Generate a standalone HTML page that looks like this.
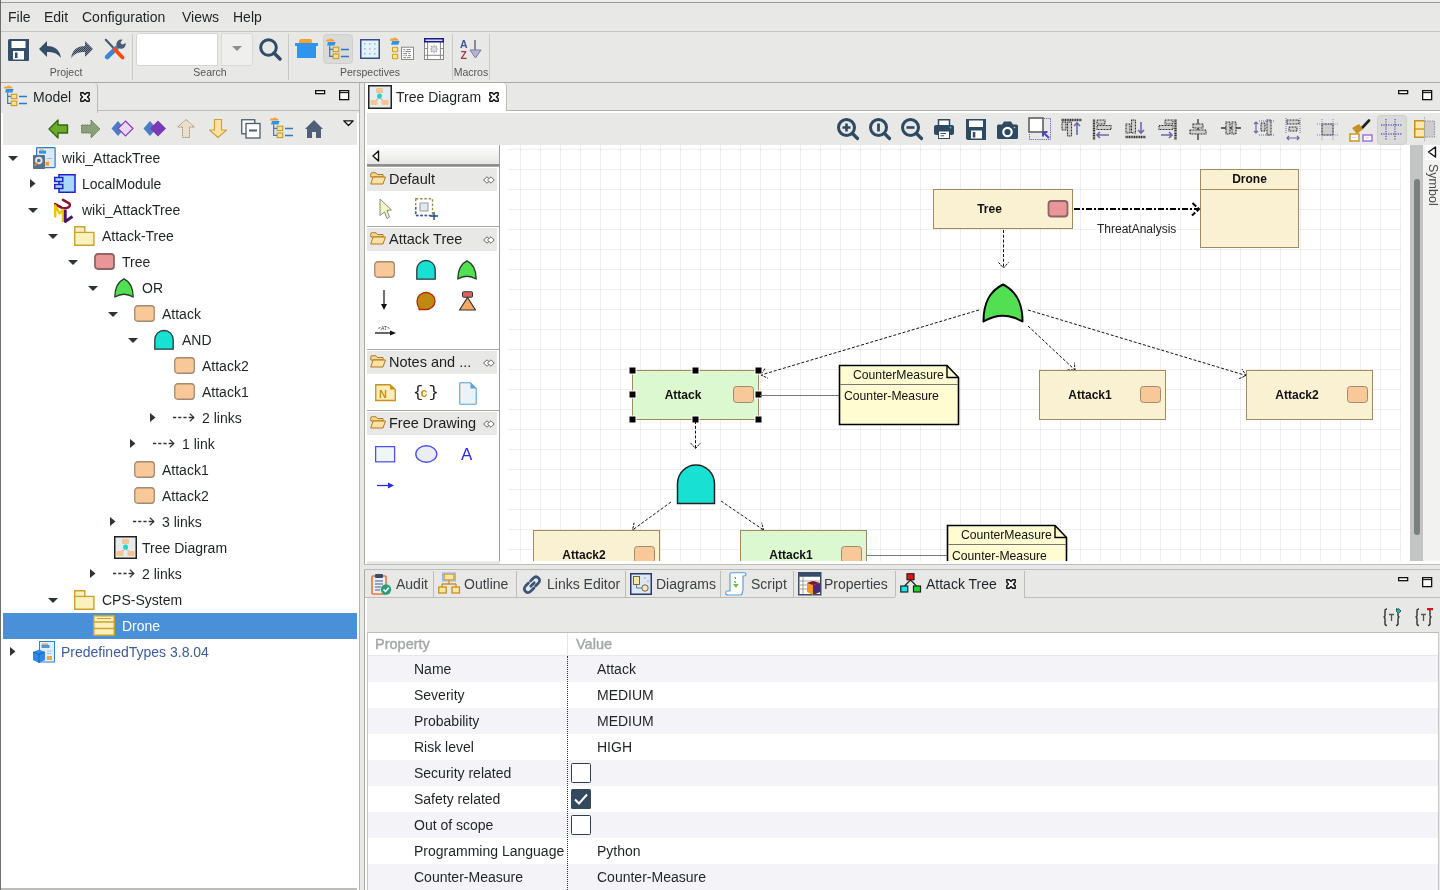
<!DOCTYPE html>
<html><head><meta charset="utf-8"><style>
html,body{margin:0;padding:0;}
body{width:1440px;height:890px;overflow:hidden;position:relative;background:#e8e8e7;font-family:"Liberation Sans",sans-serif;}
.a{position:absolute;}
.t{position:absolute;white-space:nowrap;line-height:1;will-change:transform;}
svg{overflow:visible;will-change:transform}
</style></head><body>
<div class="a" style="left:0px;top:0px;width:1440px;height:2px;background:#ececec;"></div>
<div class="a" style="left:0px;top:2px;width:1440px;height:1px;background:#9b9b98;"></div>
<div class="a" style="left:0px;top:31px;width:1440px;height:1px;background:#c4c4c0;"></div>
<div class="a" style="left:0px;top:82px;width:1440px;height:1px;background:#a9a9a5;"></div>
<div class="a" style="left:0px;top:0px;width:1px;height:890px;background:#6f6f6f;"></div>
<div class="t" style="left:7.5px;top:10.15px;font-size:14px;color:#1f2324;font-weight:normal;">File</div>
<div class="t" style="left:44.3px;top:10.15px;font-size:14px;color:#1f2324;font-weight:normal;">Edit</div>
<div class="t" style="left:82.3px;top:10.15px;font-size:14px;color:#1f2324;font-weight:normal;">Configuration</div>
<div class="t" style="left:181.5px;top:10.15px;font-size:14px;color:#1f2324;font-weight:normal;">Views</div>
<div class="t" style="left:233.3px;top:10.15px;font-size:14px;color:#1f2324;font-weight:normal;">Help</div>
<div class="a" style="left:132px;top:34px;width:1px;height:46px;background:#c9c9c6;"></div>
<div class="a" style="left:288px;top:34px;width:1px;height:46px;background:#c9c9c6;"></div>
<div class="a" style="left:452px;top:34px;width:1px;height:46px;background:#c9c9c6;"></div>
<div class="a" style="left:489px;top:34px;width:1px;height:46px;background:#c9c9c6;"></div>
<div class="t" style="left:15.5px;width:100px;text-align:center;top:67.11px;font-size:10.5px;color:#555753">Project</div>
<div class="t" style="left:160px;width:100px;text-align:center;top:67.11px;font-size:10.5px;color:#555753">Search</div>
<div class="t" style="left:320px;width:100px;text-align:center;top:67.11px;font-size:10.5px;color:#555753">Perspectives</div>
<div class="t" style="left:421px;width:100px;text-align:center;top:67.11px;font-size:10.5px;color:#555753">Macros</div>
<svg class="a" style="left:8px;top:39px;" width="21" height="22" viewBox="0 0 21 22"><path d="M0 1.5 Q0 0 1.5 0 H21 V21 Q21 22 20 22 H1.5 Q0 22 0 20.5Z" fill="#354f6b"/>
<rect x="3.5" y="2" width="14" height="7" fill="#fff"/><rect x="5" y="12" width="11" height="8.5" fill="#fff"/><rect x="7" y="13.5" width="2.5" height="5.5" fill="#354f6b"/></svg>
<svg class="a" style="left:39px;top:41px;" width="22" height="18" viewBox="0 0 22 18"><path d="M0 8 L8 0 V5 Q20 5 22 17 Q17 10 8 11 V16 Z" fill="#354f6b"/></svg>
<svg class="a" style="left:71px;top:41px;" width="22" height="18" viewBox="0 0 22 18"><defs><pattern id="chk" width="2" height="2" patternUnits="userSpaceOnUse"><rect width="1" height="1" fill="#2e4058"/><rect x="1" y="1" width="1" height="1" fill="#2e4058"/><rect x="1" width="1" height="1" fill="#7d8690"/><rect y="1" width="1" height="1" fill="#7d8690"/></pattern></defs><path d="M22 8 L14 0 V5 Q2 5 0 17 Q5 10 14 11 V16 Z" fill="url(#chk)"/></svg>
<svg class="a" style="left:104px;top:38px;" width="22" height="22" viewBox="0 0 22 22"><path d="M3.2 19 L12.5 10" stroke="#3a86d4" stroke-width="4.6" stroke-linecap="round"/>
<circle cx="17" cy="6.2" r="4.6" fill="#4a5a72"/><circle cx="18.6" cy="4.6" r="1.9" fill="#e8e8e7"/><path d="M18.6 4.6 L22 1.2" stroke="#e8e8e7" stroke-width="3.8"/>
<path d="M1.8 1.8 L9.5 10" stroke="#4a5a72" stroke-width="2.2" stroke-linecap="round"/><path d="M10.5 11 L18.5 19.5" stroke="#fb4a10" stroke-width="3.8" stroke-linecap="round"/><path d="M10 10.5 L12 12.5" stroke="#fb4a10" stroke-width="2.4"/></svg>
<div class="a" style="left:136px;top:33px;width:80px;height:31px;background:#fff;border:1px solid #d5d5d2;border-radius:3px 0 0 3px"></div>
<div class="a" style="left:221px;top:33px;width:30px;height:31px;background:#efefee;border:1px solid #dadad7;border-radius:0 3px 3px 0"></div>
<svg class="a" style="left:232px;top:46px;" width="10" height="6" viewBox="0 0 10 6"><path d="M0 0 H10 L5 5Z" fill="#8b8e8f"/></svg>
<svg class="a" style="left:259px;top:38px;" width="23" height="23" viewBox="0 0 23 23"><circle cx="9.5" cy="9.5" r="7.8" fill="none" stroke="#2e4c66" stroke-width="3"/><path d="M15 15 L21 21" stroke="#2e4c66" stroke-width="3.5" stroke-linecap="round"/></svg>
<svg class="a" style="left:295px;top:39px;" width="23" height="20" viewBox="0 0 23 20"><rect x="4" y="0" width="13" height="5" rx="2" fill="#f8a12a"/><path d="M0 4 H23 V7 H21 V19 H2 V7 H0Z" fill="#2d95ec"/></svg>
<div class="a" style="left:323px;top:34px;width:28px;height:28px;background:#dadad8;border:1px solid #cfcfcc;border-radius:4px"></div>
<svg class="a" style="left:326px;top:38px;" width="23" height="22" viewBox="0 0 23 22"><path d="M0 2.6 Q0 1.5 1.5 1.5 H3 Q4 0 5.5 0.5 L6 1.5 H7 Q8.3 1.5 8.3 2.6 V3.6 H0Z" fill="#f9a030"/><path d="M2 3.9 H9.6 L8.4 7.5 H1Z" fill="#2d94ec"/>
<path d="M3.7 7.5 V18.3 H7 M3.7 11.3 H7" stroke="#2f78c4" stroke-width="1.2" fill="none"/>
<rect x="7.2" y="9.2" width="5.6" height="4.4" fill="#fbe08c" stroke="#c99a2a" stroke-width="1.1"/><rect x="7.2" y="16" width="5.6" height="4.6" fill="#fbe08c" stroke="#c99a2a" stroke-width="1.1"/>
<path d="M15 11.5 H23 M15 18.5 H23" stroke="#2f78c4" stroke-width="1.3"/></svg>
<svg class="a" style="left:360px;top:39px;" width="20" height="20" viewBox="0 0 20 20"><rect x="0.75" y="0.75" width="18.5" height="18.5" fill="#dff4fb" stroke="#3a4a8a" stroke-width="1.5"/><rect x="4" y="4" width="1.6" height="1.6" fill="#c7a9e6"/><rect x="4" y="9" width="1.6" height="1.6" fill="#c7a9e6"/><rect x="4" y="14" width="1.6" height="1.6" fill="#c7a9e6"/><rect x="9" y="4" width="1.6" height="1.6" fill="#c7a9e6"/><rect x="9" y="9" width="1.6" height="1.6" fill="#c7a9e6"/><rect x="9" y="14" width="1.6" height="1.6" fill="#c7a9e6"/><rect x="14" y="4" width="1.6" height="1.6" fill="#c7a9e6"/><rect x="14" y="9" width="1.6" height="1.6" fill="#c7a9e6"/><rect x="14" y="14" width="1.6" height="1.6" fill="#c7a9e6"/></svg>
<svg class="a" style="left:390px;top:37px;" width="24" height="24" viewBox="0 0 24 24"><path d="M0 2.8 Q0 1.6 1.6 1.6 H3 Q4 0 5.5 0.6 L6 1.6 H7 Q8.2 1.6 8.2 2.8 V3.8 H0Z" fill="#f9a030"/><path d="M2.2 4 H9.6 L8.4 7.8 H1Z" fill="#2d94ec"/><rect x="2.5" y="10.2" width="5.2" height="4.6" rx="0.6" fill="#fce28a" stroke="#c9a030" stroke-width="1.1"/><rect x="2.5" y="17.2" width="5.2" height="4.6" rx="0.6" fill="#fce28a" stroke="#c9a030" stroke-width="1.1"/><rect x="11.5" y="10.2" width="12" height="12.3" fill="#fff" stroke="#888" stroke-width="1"/><path d="M13.3 12.6 H15.2 M16.5 12.6 H20.8 M13.3 14.6 H14.3 M15.4 14.6 H21 M13.3 16.6 H17 M18.5 16.6 H20 M13.3 18.6 H14.5 M15.5 18.6 H17 M18.2 18.6 H21 M13.3 20.6 H16 M17 20.6 H20.5" stroke="#777" stroke-width="0.9"/></svg>
<svg class="a" style="left:424px;top:38px;" width="20" height="22" viewBox="0 0 20 22"><rect x="0.5" y="0.5" width="19" height="21" fill="#fff" stroke="#888" stroke-width="1"/><path d="M3.6 4 V21.5 M16.4 4 V21.5 M0.5 10.5 H3.6 M16.4 10.5 H19.5 M0.5 17.3 H19.5" stroke="#888" stroke-width="1"/><rect x="0.75" y="0.75" width="18.5" height="3" fill="#dcdcf0" stroke="#1a1a8a" stroke-width="1.5"/><g stroke="#aaa" stroke-width="1.2"><path d="M10 6.8 V15.2 M5.8 11 H14.2 M7 8 L13 14 M13 8 L7 14"/></g><circle cx="10" cy="11" r="2.6" fill="#dcdcf0" stroke="#b0b0b0" stroke-width="0.8"/></svg>
<svg class="a" style="left:460px;top:39px;" width="22" height="20" viewBox="0 0 22 20"><text x="0" y="9" font-family="Liberation Sans" font-weight="bold" font-size="10.5" fill="#3a5a9e">A</text><text x="0.5" y="19.5" font-family="Liberation Sans" font-weight="bold" font-size="10.5" fill="#9e3a56">Z</text><path d="M15 1 V12" stroke="#6a6a8a" stroke-width="1.5"/><path d="M10 11 H21 L15.5 19Z" fill="#b6b4d6" stroke="#7a7a9a" stroke-width="1"/></svg>
<div class="a" style="left:1px;top:83px;width:358px;height:807px;background:#e8e8e7;"></div>
<div class="a" style="left:359px;top:83px;width:1px;height:807px;background:#b2b2af;"></div>
<div class="a" style="left:1px;top:83px;width:96px;height:30px;background:#e8e8e7;border-right:1px solid #bcbcb8;border-radius:0 4px 0 0"></div>
<div class="a" style="left:98px;top:110px;width:261px;height:1px;background:#bcbcb8;"></div>
<svg class="a" style="left:4px;top:85px;" width="23" height="22" viewBox="0 0 23 22"><path d="M0 2.6 Q0 1.5 1.5 1.5 H3 Q4 0 5.5 0.5 L6 1.5 H7 Q8.3 1.5 8.3 2.6 V3.6 H0Z" fill="#f9a030"/><path d="M2 3.9 H9.6 L8.4 7.5 H1Z" fill="#2d94ec"/>
<path d="M3.7 7.5 V18.3 H7 M3.7 11.3 H7" stroke="#2f78c4" stroke-width="1.2" fill="none"/>
<rect x="7.2" y="9.2" width="5.6" height="4.4" fill="#fbe08c" stroke="#c99a2a" stroke-width="1.1"/><rect x="7.2" y="16" width="5.6" height="4.6" fill="#fbe08c" stroke="#c99a2a" stroke-width="1.1"/>
<path d="M15 11.5 H23 M15 18.5 H23" stroke="#2f78c4" stroke-width="1.3"/></svg>
<div class="t" style="left:32.5px;top:90.15px;font-size:14px;color:#1f2324;font-weight:normal;">Model</div>
<svg class="a" style="left:80px;top:92px;" width="10" height="10" viewBox="0 0 10 10"><path d="M0.8 0.8 H3.3 L5 2.6 L6.7 0.8 H9.2 V3.3 L7.4 5 L9.2 6.7 V9.2 H6.7 L5 7.4 L3.3 9.2 H0.8 V6.7 L2.6 5 L0.8 3.3Z" fill="#fff" stroke="#111" stroke-width="1.4" stroke-linejoin="round"/></svg>
<svg class="a" style="left:315px;top:90px;" width="11" height="5" viewBox="0 0 11 5"><rect x="0.65" y="0.65" width="9" height="3" fill="#fff" stroke="#111" stroke-width="1.3"/></svg>
<svg class="a" style="left:339px;top:90px;" width="11" height="11" viewBox="0 0 11 11"><rect x="0.65" y="0.65" width="9" height="9" fill="#fff" stroke="#111" stroke-width="1.3"/><path d="M0.65 2.6 H9.65" stroke="#111" stroke-width="1.1"/></svg>
<div class="a" style="left:1px;top:113px;width:358px;height:777px;background:#fff;"></div>
<div class="a" style="left:3px;top:113px;width:354px;height:32px;background:#e8e8e7;"></div>
<div class="a" style="left:1px;top:888px;width:356px;height:2px;background:#bcbcb8;"></div>
<div class="a" style="left:364px;top:83px;width:1px;height:481px;background:#aaaaa7;"></div>
<div class="a" style="left:365px;top:110px;width:1075px;height:1px;background:#b0b0ac;"></div>
<div class="a" style="left:365px;top:83px;width:141px;height:29px;background:#fff;border-right:1px solid #bcbcb8;border-radius:0 4px 0 0"></div>
<div class="a" style="left:365px;top:111px;width:1075px;height:2px;background:#fff;"></div>
<div class="a" style="left:365px;top:113px;width:2px;height:451px;background:#fff;"></div>
<div class="a" style="left:367px;top:113px;width:1073px;height:32px;background:#e8e8e7;"></div>
<svg class="a" style="left:1398px;top:90px;" width="11" height="5" viewBox="0 0 11 5"><rect x="0.65" y="0.65" width="9" height="3" fill="#fff" stroke="#111" stroke-width="1.3"/></svg>
<svg class="a" style="left:1422px;top:90px;" width="11" height="11" viewBox="0 0 11 11"><rect x="0.65" y="0.65" width="9" height="9" fill="#fff" stroke="#111" stroke-width="1.3"/><path d="M0.65 2.6 H9.65" stroke="#111" stroke-width="1.1"/></svg>
<div class="a" style="left:364px;top:564px;width:1076px;height:1px;background:#bcbcb8;"></div>
<div class="a" style="left:364px;top:565px;width:1076px;height:4px;background:#e8e8e7;"></div>
<svg class="a" style="left:48px;top:119px;" width="21" height="20" viewBox="0 0 21 20"><path d="M1 10 L10 1 V6 H19.5 V14 H10 V19 Z" fill="#6aac2a" stroke="#2f6a12" stroke-width="1.4" stroke-linejoin="round"/></svg>
<svg class="a" style="left:80px;top:119px;" width="21" height="20" viewBox="0 0 21 20"><path d="M20 10 L11 1 V6 H1.5 V14 H11 V19 Z" fill="#8aa07a" stroke="#5a7050" stroke-width="1" stroke-dasharray="1 0.6"/></svg>
<svg class="a" style="left:111px;top:120px;" width="23" height="17" viewBox="0 0 23 17"><path d="M7 1 L13.5 8.5 L7 16 L0.5 8.5Z" fill="#4a7cc8"/><path d="M14.5 1 L22 8.5 L14.5 16 L7 8.5Z" fill="#ead8f2" stroke="#8a3fc0" stroke-width="1.2"/></svg>
<svg class="a" style="left:143px;top:120px;" width="24" height="17" viewBox="0 0 24 17"><path d="M7 1 L13.5 8.5 L7 16 L0.5 8.5Z" fill="#4a7cc8"/><path d="M15 0.5 L23 8.5 L15 16.5 L7 8.5Z" fill="#7a3ab8"/></svg>
<svg class="a" style="left:177px;top:119px;" width="18" height="19" viewBox="0 0 18 19"><path d="M9 0.5 L17.5 8 H12.5 V18.5 H5.5 V8 H0.5Z" fill="#e8e0c8" stroke="#9a8a6a" stroke-width="1" stroke-dasharray="1 0.6"/></svg>
<svg class="a" style="left:209px;top:119px;" width="18" height="19" viewBox="0 0 18 19"><path d="M9 18.5 L17.5 11 H12.5 V0.5 H5.5 V11 H0.5Z" fill="#fde49a" stroke="#d0a040" stroke-width="1.2" stroke-linejoin="round"/></svg>
<svg class="a" style="left:241px;top:119px;" width="20" height="20" viewBox="0 0 20 20"><rect x="0.75" y="0.75" width="13" height="14" fill="#fff" stroke="#4a5a70" stroke-width="1.3"/><rect x="5" y="4.5" width="14" height="14.5" fill="#fff" stroke="#4a5a70" stroke-width="1.3"/><path d="M8 11.5 H16" stroke="#4a5a70" stroke-width="2"/></svg>
<svg class="a" style="left:270px;top:117px;" width="23" height="22" viewBox="0 0 23 22"><path d="M0 2.6 Q0 1.5 1.5 1.5 H3 Q4 0 5.5 0.5 L6 1.5 H7 Q8.3 1.5 8.3 2.6 V3.6 H0Z" fill="#f9a030"/><path d="M2 3.9 H9.6 L8.4 7.5 H1Z" fill="#2d94ec"/>
<path d="M3.7 7.5 V18.3 H7 M3.7 11.3 H7" stroke="#2f78c4" stroke-width="1.2" fill="none"/>
<rect x="7.2" y="9.2" width="5.6" height="4.4" fill="#fbe08c" stroke="#c99a2a" stroke-width="1.1"/><rect x="7.2" y="16" width="5.6" height="4.6" fill="#fbe08c" stroke="#c99a2a" stroke-width="1.1"/>
<path d="M15 11.5 H23 M15 18.5 H23" stroke="#2f78c4" stroke-width="1.3"/></svg>
<svg class="a" style="left:305px;top:120px;" width="18" height="18" viewBox="0 0 18 18"><path d="M9 0 L18 9 H16 V18 H11 V12 H7 V18 H2 V9 H0Z" fill="#4f5f7a"/></svg>
<svg class="a" style="left:343px;top:120px;" width="11" height="6" viewBox="0 0 11 6"><path d="M0.8 0.8 H10.2 L5.5 5.5Z" fill="#fff" stroke="#111" stroke-width="1.3" stroke-linejoin="round"/></svg>
<svg class="a" style="left:7.5px;top:156px;" width="10" height="5" viewBox="0 0 10 5"><path d="M0 0 H10 L5 5Z" fill="#2e3436"/></svg>
<svg class="a" style="left:33px;top:146.5px;" width="23" height="22" viewBox="0 0 23 22"><rect x="3.6" y="0.6" width="18.5" height="20" rx="0.8" fill="#dfe9f6" stroke="#2f7ac4" stroke-width="1.2"/>
<rect x="7" y="1.8" width="3.8" height="1.8" rx="0.8" fill="#f4b050"/><rect x="6" y="3.6" width="7" height="3" fill="#2d94ec"/><path d="M13.5 11.5 H19" stroke="#9cc0e4" stroke-width="1"/><rect x="12.5" y="14.8" width="3.5" height="4" fill="#f8a020"/>
<rect x="0" y="8" width="12" height="14" rx="0.8" fill="#5a7088"/><circle cx="5.8" cy="13.5" r="2.8" fill="none" stroke="#dfe6ee" stroke-width="1.9"/><path d="M1.8 18.2 L4.3 16" stroke="#f08a30" stroke-width="1.5" stroke-linecap="round"/></svg>
<div class="t" style="left:62px;top:151.15px;font-size:14px;color:#1f2324;font-weight:normal;">wiki_AttackTree</div>
<svg class="a" style="left:30px;top:178.5px;" width="6" height="9" viewBox="0 0 6 9"><path d="M0 0 L5.5 4.5 L0 9Z" fill="#2e3436"/></svg>
<svg class="a" style="left:54px;top:174.0px;" width="22" height="19" viewBox="0 0 22 19"><rect x="5" y="0.75" width="16" height="17.5" fill="#a8d8fa" stroke="#2020c8" stroke-width="1.5"/>
<rect x="0.75" y="3.5" width="8" height="4" fill="#a8d8fa" stroke="#2020c8" stroke-width="1.5"/><rect x="0.75" y="10.5" width="8" height="4" fill="#a8d8fa" stroke="#2020c8" stroke-width="1.5"/></svg>
<div class="t" style="left:82px;top:177.15px;font-size:14px;color:#1f2324;font-weight:normal;">LocalModule</div>
<svg class="a" style="left:27.5px;top:208px;" width="10" height="5" viewBox="0 0 10 5"><path d="M0 0 H10 L5 5Z" fill="#2e3436"/></svg>
<svg class="a" style="left:54px;top:196.5px;" width="21" height="26" viewBox="0 0 21 26"><path d="M1.2 7.2 L7.5 10.6 Q10.5 12 13.8 10.6 Q17 8.6 15.2 6.4 L9 2.8" fill="none" stroke="#8c1030" stroke-width="2.6" stroke-linecap="round"/>
<path d="M1.2 20.5 V8.5 L5.6 16.5 L9 12.8 V25" fill="none" stroke="#f0c400" stroke-width="2.5" stroke-linejoin="round"/>
<path d="M11.3 12.8 V24.5 L18.5 19.5" fill="none" stroke="#4a1470" stroke-width="2.8" stroke-linejoin="round"/></svg>
<div class="t" style="left:82px;top:203.15px;font-size:14px;color:#1f2324;font-weight:normal;">wiki_AttackTree</div>
<svg class="a" style="left:47.5px;top:234px;" width="10" height="5" viewBox="0 0 10 5"><path d="M0 0 H10 L5 5Z" fill="#2e3436"/></svg>
<svg class="a" style="left:74px;top:225.5px;" width="21" height="20" viewBox="0 0 21 20"><path d="M0.75 0.75 H10.8 V6.4 H19.9 V19.3 H0.75Z" fill="#fdf0bc" stroke="#c9a230" stroke-width="1.4"/><path d="M0.75 6.4 H10.8" stroke="#c9a230" stroke-width="1.3"/></svg>
<div class="t" style="left:102px;top:229.15px;font-size:14px;color:#1f2324;font-weight:normal;">Attack-Tree</div>
<svg class="a" style="left:67.5px;top:260px;" width="10" height="5" viewBox="0 0 10 5"><path d="M0 0 H10 L5 5Z" fill="#2e3436"/></svg>
<svg class="a" style="left:94px;top:253.0px;" width="21" height="17" viewBox="0 0 21 17"><rect x="1" y="1" width="19" height="15" rx="3" fill="#e89697" stroke="#8e6566" stroke-width="1.8"/></svg>
<div class="t" style="left:122px;top:255.15px;font-size:14px;color:#1f2324;font-weight:normal;">Tree</div>
<svg class="a" style="left:87.5px;top:286px;" width="10" height="5" viewBox="0 0 10 5"><path d="M0 0 H10 L5 5Z" fill="#2e3436"/></svg>
<svg class="a" style="left:114px;top:277.5px;" width="20" height="20" viewBox="0 0 20 20"><path d="M10 0.8 Q19 5 19.2 19 Q10 13.5 0.8 19 Q1 5 10 0.8Z" fill="#52e052" stroke="#2a3a2a" stroke-width="1.4" stroke-linejoin="round"/></svg>
<div class="t" style="left:142px;top:281.15px;font-size:14px;color:#1f2324;font-weight:normal;">OR</div>
<svg class="a" style="left:107.5px;top:312px;" width="10" height="5" viewBox="0 0 10 5"><path d="M0 0 H10 L5 5Z" fill="#2e3436"/></svg>
<svg class="a" style="left:134px;top:305.0px;" width="21" height="17" viewBox="0 0 21 17"><rect x="0.75" y="0.75" width="19.5" height="15.5" rx="3" fill="#f8c898" stroke="#a08a70" stroke-width="1.3"/></svg>
<div class="t" style="left:162px;top:307.15px;font-size:14px;color:#1f2324;font-weight:normal;">Attack</div>
<svg class="a" style="left:127.5px;top:338px;" width="10" height="5" viewBox="0 0 10 5"><path d="M0 0 H10 L5 5Z" fill="#2e3436"/></svg>
<svg class="a" style="left:154px;top:329.5px;" width="20" height="20" viewBox="0 0 20 20"><path d="M0.8 19.2 V9.5 A9.2 9 0 0 1 19.2 9.5 V19.2Z" fill="#18e0d2" stroke="#2a3a3a" stroke-width="1.3"/></svg>
<div class="t" style="left:182px;top:333.15px;font-size:14px;color:#1f2324;font-weight:normal;">AND</div>
<svg class="a" style="left:174px;top:357.0px;" width="21" height="17" viewBox="0 0 21 17"><rect x="0.75" y="0.75" width="19.5" height="15.5" rx="3" fill="#f8c898" stroke="#a08a70" stroke-width="1.3"/></svg>
<div class="t" style="left:202px;top:359.15px;font-size:14px;color:#1f2324;font-weight:normal;">Attack2</div>
<svg class="a" style="left:174px;top:383.0px;" width="21" height="17" viewBox="0 0 21 17"><rect x="0.75" y="0.75" width="19.5" height="15.5" rx="3" fill="#f8c898" stroke="#a08a70" stroke-width="1.3"/></svg>
<div class="t" style="left:202px;top:385.15px;font-size:14px;color:#1f2324;font-weight:normal;">Attack1</div>
<svg class="a" style="left:150px;top:412.5px;" width="6" height="9" viewBox="0 0 6 9"><path d="M0 0 L5.5 4.5 L0 9Z" fill="#2e3436"/></svg>
<svg class="a" style="left:173px;top:412.5px;" width="22" height="9" viewBox="0 0 22 9"><path d="M0 4.5 H3.2 M5.2 4.5 H8.4 M10.4 4.5 H13.6 M15.6 4.5 H20.5" stroke="#2e3436" stroke-width="1.3"/><path d="M16.8 0.6 L20.8 4.5 L16.8 8.4" fill="none" stroke="#2e3436" stroke-width="1.3"/></svg>
<div class="t" style="left:202px;top:411.15px;font-size:14px;color:#1f2324;font-weight:normal;">2 links</div>
<svg class="a" style="left:130px;top:438.5px;" width="6" height="9" viewBox="0 0 6 9"><path d="M0 0 L5.5 4.5 L0 9Z" fill="#2e3436"/></svg>
<svg class="a" style="left:153px;top:438.5px;" width="22" height="9" viewBox="0 0 22 9"><path d="M0 4.5 H3.2 M5.2 4.5 H8.4 M10.4 4.5 H13.6 M15.6 4.5 H20.5" stroke="#2e3436" stroke-width="1.3"/><path d="M16.8 0.6 L20.8 4.5 L16.8 8.4" fill="none" stroke="#2e3436" stroke-width="1.3"/></svg>
<div class="t" style="left:182px;top:437.15px;font-size:14px;color:#1f2324;font-weight:normal;">1 link</div>
<svg class="a" style="left:134px;top:461.0px;" width="21" height="17" viewBox="0 0 21 17"><rect x="0.75" y="0.75" width="19.5" height="15.5" rx="3" fill="#f8c898" stroke="#a08a70" stroke-width="1.3"/></svg>
<div class="t" style="left:162px;top:463.15px;font-size:14px;color:#1f2324;font-weight:normal;">Attack1</div>
<svg class="a" style="left:134px;top:487.0px;" width="21" height="17" viewBox="0 0 21 17"><rect x="0.75" y="0.75" width="19.5" height="15.5" rx="3" fill="#f8c898" stroke="#a08a70" stroke-width="1.3"/></svg>
<div class="t" style="left:162px;top:489.15px;font-size:14px;color:#1f2324;font-weight:normal;">Attack2</div>
<svg class="a" style="left:110px;top:516.5px;" width="6" height="9" viewBox="0 0 6 9"><path d="M0 0 L5.5 4.5 L0 9Z" fill="#2e3436"/></svg>
<svg class="a" style="left:133px;top:516.5px;" width="22" height="9" viewBox="0 0 22 9"><path d="M0 4.5 H3.2 M5.2 4.5 H8.4 M10.4 4.5 H13.6 M15.6 4.5 H20.5" stroke="#2e3436" stroke-width="1.3"/><path d="M16.8 0.6 L20.8 4.5 L16.8 8.4" fill="none" stroke="#2e3436" stroke-width="1.3"/></svg>
<div class="t" style="left:162px;top:515.15px;font-size:14px;color:#1f2324;font-weight:normal;">3 links</div>
<svg class="a" style="left:114px;top:536.0px;" width="23" height="23" viewBox="0 0 23 23"><rect x="0.75" y="0.75" width="21.5" height="21.5" fill="#e4ecf0" stroke="#222" stroke-width="1.5"/>
<rect x="8" y="3" width="7" height="5" rx="1" fill="#f6c48e"/><circle cx="11.5" cy="11" r="2.5" fill="#18d8c8"/>
<path d="M11.5 13 L5 17 M11.5 13 L18 17" stroke="#99a" stroke-width="0.8"/><rect x="2.5" y="15" width="7" height="5" rx="1" fill="#f6c48e"/><rect x="13.5" y="15" width="7" height="5" rx="1" fill="#f6c48e"/></svg>
<div class="t" style="left:142px;top:541.15px;font-size:14px;color:#1f2324;font-weight:normal;">Tree Diagram</div>
<svg class="a" style="left:90px;top:568.5px;" width="6" height="9" viewBox="0 0 6 9"><path d="M0 0 L5.5 4.5 L0 9Z" fill="#2e3436"/></svg>
<svg class="a" style="left:113px;top:568.5px;" width="22" height="9" viewBox="0 0 22 9"><path d="M0 4.5 H3.2 M5.2 4.5 H8.4 M10.4 4.5 H13.6 M15.6 4.5 H20.5" stroke="#2e3436" stroke-width="1.3"/><path d="M16.8 0.6 L20.8 4.5 L16.8 8.4" fill="none" stroke="#2e3436" stroke-width="1.3"/></svg>
<div class="t" style="left:142px;top:567.15px;font-size:14px;color:#1f2324;font-weight:normal;">2 links</div>
<svg class="a" style="left:47.5px;top:598px;" width="10" height="5" viewBox="0 0 10 5"><path d="M0 0 H10 L5 5Z" fill="#2e3436"/></svg>
<svg class="a" style="left:74px;top:589.5px;" width="21" height="20" viewBox="0 0 21 20"><path d="M0.75 0.75 H10.8 V6.4 H19.9 V19.3 H0.75Z" fill="#fdf0bc" stroke="#c9a230" stroke-width="1.4"/><path d="M0.75 6.4 H10.8" stroke="#c9a230" stroke-width="1.3"/></svg>
<div class="t" style="left:102px;top:593.15px;font-size:14px;color:#1f2324;font-weight:normal;">CPS-System</div>
<div class="a" style="left:3px;top:613px;width:354px;height:26px;background:#4a90d9;"></div>
<svg class="a" style="left:93px;top:615.0px;" width="22" height="21" viewBox="0 0 22 21"><rect x="0.75" y="0.75" width="20.5" height="19.5" fill="#fdf0bc" stroke="#c9a230" stroke-width="1.5"/><path d="M0.75 7 H21.25 M0.75 13.5 H21.25" stroke="#c9a230" stroke-width="1.3"/><path d="M4 3.5 H18" stroke="#c9a230" stroke-width="1"/></svg>
<div class="t" style="left:122px;top:619.15px;font-size:14px;color:#ffffff;font-weight:normal;">Drone</div>
<svg class="a" style="left:10px;top:646.5px;" width="6" height="9" viewBox="0 0 6 9"><path d="M0 0 L5.5 4.5 L0 9Z" fill="#2e3436"/></svg>
<svg class="a" style="left:33px;top:640.5px;" width="22" height="22" viewBox="0 0 22 22"><rect x="6.5" y="0.5" width="15" height="20.5" fill="#e3eefa" stroke="#2f7fd0" stroke-width="1"/>
<rect x="9" y="2.5" width="6" height="2" fill="#f4a640"/><rect x="8.5" y="4" width="8" height="3" fill="#3f9be8"/><path d="M14 10 H19 M14 12.5 H18" stroke="#8ab8e8" stroke-width="0.8"/><rect x="14" y="15" width="5" height="4" fill="#f4a640"/>
<path d="M0 11 L6 8.5 L12 11 V19 L6 22 L0 19Z" fill="#2d8ae8"/><path d="M0 11 L6 13.5 L12 11 M6 13.5 V22" stroke="#1a5aa8" stroke-width="0.8" fill="none"/></svg>
<div class="t" style="left:61px;top:645.15px;font-size:14px;color:#3d5c9c;font-weight:normal;">PredefinedTypes 3.8.04</div>
<svg class="a" style="left:368px;top:85px;" width="24" height="24" viewBox="0 0 24 24"><rect x="0.75" y="0.75" width="22.5" height="22.5" fill="#e4ecf0" stroke="#222" stroke-width="1.5"/>
<rect x="8" y="3" width="7" height="5" rx="1" fill="#f6c48e"/><circle cx="11.5" cy="11" r="2.5" fill="#18d8c8"/>
<path d="M11.5 13 L5 17 M11.5 13 L18 17" stroke="#99a" stroke-width="0.8"/><rect x="2.5" y="15" width="7" height="5" rx="1" fill="#f6c48e"/><rect x="13.5" y="15" width="7" height="5" rx="1" fill="#f6c48e"/></svg>
<div class="t" style="left:396px;top:90.15px;font-size:14px;color:#1f2324;font-weight:normal;">Tree Diagram</div>
<svg class="a" style="left:489px;top:92px;" width="11" height="10" viewBox="0 0 11 10"><path d="M0.8 0.8 H3.3 L5 2.6 L6.7 0.8 H9.2 V3.3 L7.4 5 L9.2 6.7 V9.2 H6.7 L5 7.4 L3.3 9.2 H0.8 V6.7 L2.6 5 L0.8 3.3Z" fill="#fff" stroke="#111" stroke-width="1.4" stroke-linejoin="round"/></svg>
<svg class="a" style="left:837px;top:118px;" width="22" height="22" viewBox="0 0 22 22"><circle cx="9.5" cy="9.5" r="8" fill="none" stroke="#2e4a62" stroke-width="3"/><path d="M15.5 15.5 L20.5 20.5" stroke="#2e4a62" stroke-width="3.2" stroke-linecap="round"/><path d="M9.5 5.5 V13.5 M5.5 9.5 H13.5" stroke="#2e4a62" stroke-width="2.6"/></svg>
<svg class="a" style="left:869px;top:118px;" width="22" height="22" viewBox="0 0 22 22"><circle cx="9.5" cy="9.5" r="8" fill="none" stroke="#2e4a62" stroke-width="3"/><path d="M15.5 15.5 L20.5 20.5" stroke="#2e4a62" stroke-width="3.2" stroke-linecap="round"/><path d="M9.5 5.5 V13.5" stroke="#2e4a62" stroke-width="2.8"/></svg>
<svg class="a" style="left:901px;top:118px;" width="22" height="22" viewBox="0 0 22 22"><circle cx="9.5" cy="9.5" r="8" fill="none" stroke="#2e4a62" stroke-width="3"/><path d="M15.5 15.5 L20.5 20.5" stroke="#2e4a62" stroke-width="3.2" stroke-linecap="round"/><path d="M5.5 9.5 H13.5" stroke="#2e4a62" stroke-width="2.6"/></svg>
<svg class="a" style="left:934px;top:119px;" width="20" height="20" viewBox="0 0 20 20"><rect x="4.5" y="0.75" width="11" height="6" fill="#fff" stroke="#2e4a62" stroke-width="1.5"/><rect x="0" y="6" width="20" height="10" rx="2" fill="#2e4a62"/><circle cx="16.5" cy="8.5" r="1" fill="#2ac0a0"/><rect x="4.5" y="12" width="11" height="7.5" fill="#fff" stroke="#2e4a62" stroke-width="1"/><path d="M6.5 14.5 H12 M6.5 16.8 H10" stroke="#2e4a62" stroke-width="0.9"/></svg>
<svg class="a" style="left:966px;top:119px;" width="20" height="21" viewBox="0 0 20 21"><path d="M0 0 H20 V21 H1.5 L0 19.5Z" fill="#2e4a62"/><rect x="3" y="1.5" width="14" height="6.5" fill="#fff"/><rect x="5" y="11.5" width="11" height="8" fill="#fff"/><rect x="6.8" y="13" width="2.5" height="5.5" fill="#2e4a62"/></svg>
<svg class="a" style="left:997px;top:121px;" width="21" height="18" viewBox="0 0 21 18"><path d="M0 5 Q0 3.5 1.5 3.5 H5 L7 0.5 H14 L16 3.5 H19.5 Q21 3.5 21 5 V16.5 Q21 18 19.5 18 H1.5 Q0 18 0 16.5Z" fill="#2e4a62"/><circle cx="10.5" cy="11" r="4.2" fill="none" stroke="#fff" stroke-width="2.2"/><circle cx="17.5" cy="6.5" r="0.8" fill="#f8d040"/></svg>
<svg class="a" style="left:1028px;top:117px;" width="24" height="24" viewBox="0 0 24 24"><rect x="1" y="1" width="14" height="14" fill="#fff" stroke="#555" stroke-width="1.5"/><path d="M16 1.5 H22.5 V22.5 H1.5 V16" fill="none" stroke="#6a5acd" stroke-width="1" stroke-dasharray="1.2 1"/><path d="M21 21 L15 15 M15 15 V19.5 M15 15 H19.5" stroke="#4a4ab0" stroke-width="2"/></svg>
<svg class="a" style="left:1061px;top:119px;" width="22" height="20" viewBox="0 0 22 20"><g fill="#cfcfcf" stroke="#333" stroke-width="1.1" stroke-dasharray="1 0.5"><rect x="1" y="3" width="4" height="8"/><rect x="6.5" y="3" width="4" height="14"/></g><path d="M0.5 1 H20.5" stroke="#333" stroke-width="2.4" stroke-dasharray="1.2 0.5"/><path d="M16 16 V4 M13 7 L16 4 L19 7" stroke="#6a6aa8" stroke-width="1.6" fill="none"/></svg>
<svg class="a" style="left:1093px;top:119px;" width="20" height="22" viewBox="0 0 20 22"><g fill="#cfcfcf" stroke="#333" stroke-width="1.1" stroke-dasharray="1 0.5"><rect x="4" y="1" width="8" height="4"/><rect x="4" y="6.5" width="14" height="4"/></g><path d="M1 0.5 V21" stroke="#333" stroke-width="2.4" stroke-dasharray="1.2 0.5"/><path d="M16 16 H4 M7 13 L4 16 L7 19" stroke="#6a6aa8" stroke-width="1.6" fill="none"/></svg>
<svg class="a" style="left:1125px;top:119px;" width="22" height="20" viewBox="0 0 22 20"><g fill="#cfcfcf" stroke="#333" stroke-width="1.1" stroke-dasharray="1 0.5"><rect x="1" y="5" width="4" height="9"/><rect x="6.5" y="1" width="4" height="13"/></g><path d="M0.5 18 H20.5" stroke="#333" stroke-width="2.4" stroke-dasharray="1.2 0.5"/><path d="M16 3 V14 M13 11 L16 14 L19 11" stroke="#6a6aa8" stroke-width="1.6" fill="none"/></svg>
<svg class="a" style="left:1157px;top:119px;" width="20" height="22" viewBox="0 0 20 22"><g fill="#cfcfcf" stroke="#333" stroke-width="1.1" stroke-dasharray="1 0.5"><rect x="8" y="1" width="8" height="4"/><rect x="2" y="6.5" width="14" height="4"/></g><path d="M18.5 0.5 V21" stroke="#333" stroke-width="2.4" stroke-dasharray="1.2 0.5"/><path d="M4 16 H15 M12 13 L15 16 L12 19" stroke="#6a6aa8" stroke-width="1.6" fill="none"/></svg>
<svg class="a" style="left:1189px;top:119px;" width="20" height="21" viewBox="0 0 20 21"><g fill="#cfcfcf" stroke="#333" stroke-width="1.1" stroke-dasharray="1 0.5"><rect x="4" y="5" width="10" height="4"/><rect x="1" y="11" width="16" height="4"/></g><path d="M9 0 V5 M9 9 V11 M9 15 V21" stroke="#333" stroke-width="1.3"/></svg>
<svg class="a" style="left:1221px;top:119px;" width="20" height="21" viewBox="0 0 20 21"><g fill="#cfcfcf" stroke="#333" stroke-width="1.1" stroke-dasharray="1 0.5"><rect x="5" y="3" width="4" height="12"/><rect x="11" y="3" width="4" height="12"/></g><path d="M0 9 H5 M9 9 H11 M15 9 H20" stroke="#333" stroke-width="1.3"/></svg>
<svg class="a" style="left:1253px;top:119px;" width="22" height="20" viewBox="0 0 22 20"><g fill="#cfcfcf" stroke="#333" stroke-width="1.1" stroke-dasharray="1 0.5"><rect x="8" y="4" width="4" height="8"/><rect x="14" y="1" width="4" height="15"/></g><path d="M6 2 H21 M6 16 H21" stroke="#6a6aa8" stroke-width="1" stroke-dasharray="1 1"/><path d="M3 3 V14 M1 5 L3 3 L5 5 M1 12 L3 14 L5 12" stroke="#6a6aa8" stroke-width="1.2" fill="none"/></svg>
<svg class="a" style="left:1285px;top:117px;" width="16" height="24" viewBox="0 0 16 24"><g fill="#cfcfcf" stroke="#333" stroke-width="1.1" stroke-dasharray="1 0.5"><rect x="2" y="3" width="12" height="4"/><rect x="4" y="10" width="8" height="4"/></g><path d="M1 1 V17 M15 1 V17" stroke="#6a6aa8" stroke-width="1" stroke-dasharray="1 1"/><path d="M2 21 H14 M4 19 L2 21 L4 23 M12 19 L14 21 L12 23" stroke="#6a6aa8" stroke-width="1.2" fill="none"/></svg>
<svg class="a" style="left:1317px;top:119px;" width="22" height="22" viewBox="0 0 22 22"><g fill="#cfcfcf" stroke="#333" stroke-width="1.1" stroke-dasharray="1 0.5"><rect x="5" y="5" width="11" height="11"/></g><path d="M0 5 H21 M5 0 V21 M16 0 V21 M0 16 H21" stroke="#6a6aa8" stroke-width="1" stroke-dasharray="1 1.2" opacity="0.8"/></svg>
<svg class="a" style="left:1349px;top:119px;" width="24" height="23" viewBox="0 0 24 23"><path d="M13 9 L20 1.5" stroke="#222" stroke-width="2.6" stroke-linecap="round"/><path d="M3 9 L10 5 L14 10 L8 15Z" fill="#c8901c"/><rect x="1" y="15" width="9" height="7" fill="#fff" stroke="#c8901c" stroke-width="1.4"/><rect x="14" y="16" width="9" height="6" fill="#fff" stroke="#9a6ad8" stroke-width="1.4"/><path d="M3.5 18.5 H7.5 M16.5 19 H20.5" stroke="#8ab" stroke-width="0.9" stroke-dasharray="1 1"/></svg>
<div class="a" style="left:1377px;top:115px;width:28px;height:28px;background:#dadad8;border:1px solid #cfcfcc;border-radius:4px"></div>
<svg class="a" style="left:1381px;top:119px;" width="21" height="21" viewBox="0 0 21 21"><path d="M0 6 H21 M0 15 H21 M5 0 V21 M14 0 V21" stroke="#5a5ac0" stroke-width="1.3" stroke-dasharray="1.2 1.2"/></svg>
<svg class="a" style="left:1414px;top:117px;" width="22" height="24" viewBox="0 0 22 24"><rect x="0.75" y="3.75" width="10" height="16.5" fill="#fce8a8" stroke="#c8901c" stroke-width="1.5"/><path d="M0.75 12 H10.75" stroke="#c8901c" stroke-width="1.3"/><rect x="10.5" y="4" width="10" height="16" fill="#ccc" stroke="#999" stroke-width="1.2" stroke-dasharray="1.5 1"/><path d="M10.5 0 V24" stroke="#aaa" stroke-width="1" stroke-dasharray="1.5 1"/></svg>
<div class="a" style="left:367px;top:145px;width:132px;height:19px;background:linear-gradient(#ffffff,#e6e6e4)"></div>
<div class="a" style="left:367px;top:164px;width:132px;height:2px;background:#8f8f8c;"></div>
<div class="a" style="left:499px;top:145px;width:1px;height:416px;background:#9d9d9a;"></div>
<div class="a" style="left:367px;top:166px;width:132px;height:395px;background:#fff;"></div>
<svg class="a" style="left:372px;top:150px;" width="8" height="12" viewBox="0 0 8 12"><path d="M6.5 1 L1 6 L6.5 11Z" fill="#fff" stroke="#111" stroke-width="1.4" stroke-linejoin="round"/></svg>
<div class="a" style="left:367px;top:166px;width:132px;height:1px;background:#a8a8a5;"></div>
<div class="a" style="left:367px;top:168px;width:130px;height:23px;background:#e8e8e7;"></div>
<svg class="a" style="left:370px;top:172px;" width="16" height="13" viewBox="0 0 16 13"><path d="M0.75 2 Q0.75 0.75 2 0.75 H6 L7.5 2.5 H13 V5 H0.75Z" fill="#f8d890" stroke="#b07820" stroke-width="1"/><path d="M0.75 12 L3 5 H15.5 L13 12Z" fill="#fbe2a0" stroke="#b07820" stroke-width="1" stroke-linejoin="round"/></svg>
<div class="t" style="left:388.5px;top:171.73px;font-size:14.5px;color:#222;font-weight:normal;">Default</div>
<svg class="a" style="left:483px;top:176px;" width="12" height="8" viewBox="0 0 12 8"><path d="M0.6 4 L4 0.8 L6 2.6 L8 0.8 L11.2 4 L8 7.2 L6 5.4 L4 7.2Z" fill="#fff" stroke="#555" stroke-width="0.9" stroke-linejoin="round"/><path d="M6 2.6 L4.4 4 L6 5.4" fill="none" stroke="#555" stroke-width="0.8"/></svg>
<svg class="a" style="left:379px;top:198px;" width="14" height="22" viewBox="0 0 14 22"><path d="M1 1 L12.5 12 L8 12.5 L10.5 19 L8 20.5 L5.5 14 L1 17.5Z" fill="#f8f4c0" stroke="#888" stroke-width="1" stroke-linejoin="round"/></svg>
<svg class="a" style="left:415px;top:198px;" width="23" height="23" viewBox="0 0 23 23"><path d="M0.75 0.75 H17.5 V17.5 H0.75Z" fill="none" stroke="#9a8a50" stroke-width="1.3" stroke-dasharray="2.5 1.8"/><path d="M0.75 9 V17.5 H15" fill="none" stroke="#2a5aa8" stroke-width="1.3" stroke-dasharray="2.5 1.8"/><rect x="5" y="5" width="8" height="8" fill="#dde8f0" stroke="#999" stroke-width="1"/><path d="M19 14 V22 M15 18 H23" stroke="#1a4a90" stroke-width="1.4"/></svg>
<div class="a" style="left:367px;top:226px;width:132px;height:1px;background:#a8a8a5;"></div>
<div class="a" style="left:367px;top:228px;width:130px;height:23px;background:#e8e8e7;"></div>
<svg class="a" style="left:370px;top:232px;" width="16" height="13" viewBox="0 0 16 13"><path d="M0.75 2 Q0.75 0.75 2 0.75 H6 L7.5 2.5 H13 V5 H0.75Z" fill="#f8d890" stroke="#b07820" stroke-width="1"/><path d="M0.75 12 L3 5 H15.5 L13 12Z" fill="#fbe2a0" stroke="#b07820" stroke-width="1" stroke-linejoin="round"/></svg>
<div class="t" style="left:388.5px;top:231.73px;font-size:14.5px;color:#222;font-weight:normal;">Attack Tree</div>
<svg class="a" style="left:483px;top:236px;" width="12" height="8" viewBox="0 0 12 8"><path d="M0.6 4 L4 0.8 L6 2.6 L8 0.8 L11.2 4 L8 7.2 L6 5.4 L4 7.2Z" fill="#fff" stroke="#555" stroke-width="0.9" stroke-linejoin="round"/><path d="M6 2.6 L4.4 4 L6 5.4" fill="none" stroke="#555" stroke-width="0.8"/></svg>
<svg class="a" style="left:374px;top:261px;" width="22" height="17" viewBox="0 0 22 17"><rect x="0.75" y="0.75" width="19.5" height="15.5" rx="3" fill="#f8c898" stroke="#a08a70" stroke-width="1.3"/></svg>
<svg class="a" style="left:416px;top:260px;" width="20" height="20" viewBox="0 0 20 20"><path d="M0.8 19.2 V9.5 A9.2 9 0 0 1 19.2 9.5 V19.2Z" fill="#18e0d2" stroke="#2a3a3a" stroke-width="1.3"/></svg>
<svg class="a" style="left:457px;top:260px;" width="20" height="20" viewBox="0 0 20 20"><path d="M10 0.8 Q19 5 19.2 19 Q10 13.5 0.8 19 Q1 5 10 0.8Z" fill="#52e052" stroke="#2a3a2a" stroke-width="1.4" stroke-linejoin="round"/></svg>
<svg class="a" style="left:380px;top:290px;" width="8" height="21" viewBox="0 0 8 21"><path d="M4 0 V16" stroke="#111" stroke-width="1.2"/><path d="M1 14 L4 20 L7 14Z" fill="#111"/></svg>
<svg class="a" style="left:416px;top:291px;" width="20" height="20" viewBox="0 0 20 20"><path d="M3 17 Q1 14 1 10 A9 8.5 0 1 1 10 18.5 H3Z" fill="#c08a10" stroke="#b02a10" stroke-width="1.3" stroke-linejoin="round"/></svg>
<svg class="a" style="left:458px;top:291px;" width="19" height="20" viewBox="0 0 19 20"><rect x="4.5" y="0.75" width="10" height="5.5" rx="1" fill="#e06060" stroke="#333" stroke-width="1"/><path d="M9.5 6.5 L17.5 19 H1.5Z" fill="#f8a860" stroke="#333" stroke-width="1.2" stroke-linejoin="round"/></svg>
<svg class="a" style="left:374px;top:325px;" width="23" height="11" viewBox="0 0 23 11"><text x="4" y="4.5" font-family="Liberation Sans" font-size="5" fill="#333">&lt;AT&gt;</text><path d="M1 8 H18" stroke="#111" stroke-width="1.3"/><path d="M16 5.5 L22 8 L16 10.5Z" fill="#111"/></svg>
<div class="a" style="left:367px;top:349px;width:132px;height:1px;background:#a8a8a5;"></div>
<div class="a" style="left:367px;top:351px;width:130px;height:23px;background:#e8e8e7;"></div>
<svg class="a" style="left:370px;top:355px;" width="16" height="13" viewBox="0 0 16 13"><path d="M0.75 2 Q0.75 0.75 2 0.75 H6 L7.5 2.5 H13 V5 H0.75Z" fill="#f8d890" stroke="#b07820" stroke-width="1"/><path d="M0.75 12 L3 5 H15.5 L13 12Z" fill="#fbe2a0" stroke="#b07820" stroke-width="1" stroke-linejoin="round"/></svg>
<div class="t" style="left:388.5px;top:354.73px;font-size:14.5px;color:#222;font-weight:normal;">Notes and ...</div>
<svg class="a" style="left:483px;top:359px;" width="12" height="8" viewBox="0 0 12 8"><path d="M0.6 4 L4 0.8 L6 2.6 L8 0.8 L11.2 4 L8 7.2 L6 5.4 L4 7.2Z" fill="#fff" stroke="#555" stroke-width="0.9" stroke-linejoin="round"/><path d="M6 2.6 L4.4 4 L6 5.4" fill="none" stroke="#555" stroke-width="0.8"/></svg>
<svg class="a" style="left:375px;top:384px;" width="21" height="18" viewBox="0 0 21 18"><path d="M0.75 0.75 H15 L20.25 5.5 V16.5 H0.75Z" fill="#fcecb8" stroke="#c8901c" stroke-width="1.3"/><path d="M15 0.75 V5.5 H20.25Z" fill="#c8901c"/><text x="4" y="13.5" font-family="Liberation Sans" font-weight="bold" font-size="11" fill="#c8901c">N</text></svg>
<svg class="a" style="left:413px;top:382px;" width="26" height="20" viewBox="0 0 26 20"><text x="0" y="15" font-family="Liberation Mono" font-size="17" fill="#222">{</text><text x="15.5" y="15" font-family="Liberation Mono" font-size="17" fill="#222">}</text><text x="7.5" y="15" font-family="Liberation Sans" font-weight="bold" font-size="12.5" fill="#c8901c">c</text></svg>
<svg class="a" style="left:459px;top:382px;" width="18" height="23" viewBox="0 0 18 23"><path d="M0.75 1.5 Q0.75 0.75 1.5 0.75 H11.5 L17.25 6.5 V21.5 Q17.25 22.25 16.5 22.25 H1.5 Q0.75 22.25 0.75 21.5Z" fill="#eaf2fa" stroke="#5ea0d6" stroke-width="1.1"/><path d="M11.5 0.75 V6.5 H17.25Z" fill="#5ea0d6"/></svg>
<div class="a" style="left:367px;top:410px;width:132px;height:1px;background:#a8a8a5;"></div>
<div class="a" style="left:367px;top:412px;width:130px;height:23px;background:#e8e8e7;"></div>
<svg class="a" style="left:370px;top:416px;" width="16" height="13" viewBox="0 0 16 13"><path d="M0.75 2 Q0.75 0.75 2 0.75 H6 L7.5 2.5 H13 V5 H0.75Z" fill="#f8d890" stroke="#b07820" stroke-width="1"/><path d="M0.75 12 L3 5 H15.5 L13 12Z" fill="#fbe2a0" stroke="#b07820" stroke-width="1" stroke-linejoin="round"/></svg>
<div class="t" style="left:388.5px;top:415.73px;font-size:14.5px;color:#222;font-weight:normal;">Free Drawing</div>
<svg class="a" style="left:483px;top:420px;" width="12" height="8" viewBox="0 0 12 8"><path d="M0.6 4 L4 0.8 L6 2.6 L8 0.8 L11.2 4 L8 7.2 L6 5.4 L4 7.2Z" fill="#fff" stroke="#555" stroke-width="0.9" stroke-linejoin="round"/><path d="M6 2.6 L4.4 4 L6 5.4" fill="none" stroke="#555" stroke-width="0.8"/></svg>
<svg class="a" style="left:375px;top:446px;" width="21" height="18" viewBox="0 0 21 18"><rect x="0.65" y="0.65" width="19" height="15.2" fill="#eef6f8" stroke="#4848f0" stroke-width="1.2"/></svg>
<svg class="a" style="left:414px;top:445px;" width="24" height="19" viewBox="0 0 24 19"><ellipse cx="12.3" cy="9" rx="10.5" ry="8.2" fill="#eaeef2" stroke="#5050f0" stroke-width="1.4"/></svg>
<div class="t" style="left:460.5px;top:446.31px;font-size:17px;color:#2a2ae8;font-weight:normal;">A</div>
<svg class="a" style="left:377px;top:481px;" width="18" height="9" viewBox="0 0 18 9"><path d="M0 4.5 H12" stroke="#2a2ae0" stroke-width="1.3"/><path d="M11 1.5 L17 4.5 L11 7.5Z" fill="#2a2ae0"/></svg>
<div class="a" style="left:367px;top:561px;width:132px;height:1px;background:#ececec;"></div>
<div class="a" style="left:500px;top:145px;width:940px;height:419px;background:#fff;"></div>
<svg class="a" style="left:500px;top:145px;" width="901" height="416" viewBox="0 0 901 416"><rect x="20" y="0" width="1" height="416" fill="#000" fill-opacity="0.065"/><rect x="40" y="0" width="1" height="416" fill="#000" fill-opacity="0.065"/><rect x="60" y="0" width="1" height="416" fill="#000" fill-opacity="0.065"/><rect x="80" y="0" width="1" height="416" fill="#000" fill-opacity="0.065"/><rect x="100" y="0" width="1" height="416" fill="#000" fill-opacity="0.065"/><rect x="120" y="0" width="1" height="416" fill="#000" fill-opacity="0.065"/><rect x="140" y="0" width="1" height="416" fill="#000" fill-opacity="0.065"/><rect x="160" y="0" width="1" height="416" fill="#000" fill-opacity="0.065"/><rect x="180" y="0" width="1" height="416" fill="#000" fill-opacity="0.065"/><rect x="200" y="0" width="1" height="416" fill="#000" fill-opacity="0.065"/><rect x="220" y="0" width="1" height="416" fill="#000" fill-opacity="0.065"/><rect x="240" y="0" width="1" height="416" fill="#000" fill-opacity="0.065"/><rect x="260" y="0" width="1" height="416" fill="#000" fill-opacity="0.065"/><rect x="280" y="0" width="1" height="416" fill="#000" fill-opacity="0.065"/><rect x="300" y="0" width="1" height="416" fill="#000" fill-opacity="0.065"/><rect x="320" y="0" width="1" height="416" fill="#000" fill-opacity="0.065"/><rect x="340" y="0" width="1" height="416" fill="#000" fill-opacity="0.065"/><rect x="360" y="0" width="1" height="416" fill="#000" fill-opacity="0.065"/><rect x="380" y="0" width="1" height="416" fill="#000" fill-opacity="0.065"/><rect x="400" y="0" width="1" height="416" fill="#000" fill-opacity="0.065"/><rect x="420" y="0" width="1" height="416" fill="#000" fill-opacity="0.065"/><rect x="440" y="0" width="1" height="416" fill="#000" fill-opacity="0.065"/><rect x="460" y="0" width="1" height="416" fill="#000" fill-opacity="0.065"/><rect x="480" y="0" width="1" height="416" fill="#000" fill-opacity="0.065"/><rect x="500" y="0" width="1" height="416" fill="#000" fill-opacity="0.065"/><rect x="520" y="0" width="1" height="416" fill="#000" fill-opacity="0.065"/><rect x="540" y="0" width="1" height="416" fill="#000" fill-opacity="0.065"/><rect x="560" y="0" width="1" height="416" fill="#000" fill-opacity="0.065"/><rect x="580" y="0" width="1" height="416" fill="#000" fill-opacity="0.065"/><rect x="600" y="0" width="1" height="416" fill="#000" fill-opacity="0.065"/><rect x="620" y="0" width="1" height="416" fill="#000" fill-opacity="0.065"/><rect x="640" y="0" width="1" height="416" fill="#000" fill-opacity="0.065"/><rect x="660" y="0" width="1" height="416" fill="#000" fill-opacity="0.065"/><rect x="680" y="0" width="1" height="416" fill="#000" fill-opacity="0.065"/><rect x="700" y="0" width="1" height="416" fill="#000" fill-opacity="0.065"/><rect x="720" y="0" width="1" height="416" fill="#000" fill-opacity="0.065"/><rect x="740" y="0" width="1" height="416" fill="#000" fill-opacity="0.065"/><rect x="760" y="0" width="1" height="416" fill="#000" fill-opacity="0.065"/><rect x="780" y="0" width="1" height="416" fill="#000" fill-opacity="0.065"/><rect x="800" y="0" width="1" height="416" fill="#000" fill-opacity="0.065"/><rect x="820" y="0" width="1" height="416" fill="#000" fill-opacity="0.065"/><rect x="840" y="0" width="1" height="416" fill="#000" fill-opacity="0.065"/><rect x="860" y="0" width="1" height="416" fill="#000" fill-opacity="0.065"/><rect x="880" y="0" width="1" height="416" fill="#000" fill-opacity="0.065"/><rect x="900" y="0" width="1" height="416" fill="#000" fill-opacity="0.065"/><rect x="8" y="4" width="893" height="1" fill="#000" fill-opacity="0.065"/><rect x="8" y="24" width="893" height="1" fill="#000" fill-opacity="0.065"/><rect x="8" y="44" width="893" height="1" fill="#000" fill-opacity="0.065"/><rect x="8" y="64" width="893" height="1" fill="#000" fill-opacity="0.065"/><rect x="8" y="84" width="893" height="1" fill="#000" fill-opacity="0.065"/><rect x="8" y="104" width="893" height="1" fill="#000" fill-opacity="0.065"/><rect x="8" y="124" width="893" height="1" fill="#000" fill-opacity="0.065"/><rect x="8" y="144" width="893" height="1" fill="#000" fill-opacity="0.065"/><rect x="8" y="164" width="893" height="1" fill="#000" fill-opacity="0.065"/><rect x="8" y="184" width="893" height="1" fill="#000" fill-opacity="0.065"/><rect x="8" y="204" width="893" height="1" fill="#000" fill-opacity="0.065"/><rect x="8" y="224" width="893" height="1" fill="#000" fill-opacity="0.065"/><rect x="8" y="244" width="893" height="1" fill="#000" fill-opacity="0.065"/><rect x="8" y="264" width="893" height="1" fill="#000" fill-opacity="0.065"/><rect x="8" y="284" width="893" height="1" fill="#000" fill-opacity="0.065"/><rect x="8" y="304" width="893" height="1" fill="#000" fill-opacity="0.065"/><rect x="8" y="324" width="893" height="1" fill="#000" fill-opacity="0.065"/><rect x="8" y="344" width="893" height="1" fill="#000" fill-opacity="0.065"/><rect x="8" y="364" width="893" height="1" fill="#000" fill-opacity="0.065"/><rect x="8" y="384" width="893" height="1" fill="#000" fill-opacity="0.065"/><rect x="8" y="404" width="893" height="1" fill="#000" fill-opacity="0.065"/></svg>
<div class="a" style="left:1410px;top:145px;width:13px;height:416px;background:#c3c5c4;"></div>
<div class="a" style="left:1414px;top:179px;width:6px;height:356px;background:#7b7f80;border-radius:3px"></div>
<div class="a" style="left:1423px;top:145px;width:17px;height:416px;background:#f2f2f1;"></div>
<div class="a" style="left:1425px;top:145px;width:15px;height:15px;background:#ffffff;"></div>
<svg class="a" style="left:1427px;top:146px;" width="10" height="12" viewBox="0 0 10 12"><path d="M8.5 1 L1.5 6 L8.5 11Z" fill="#fff" stroke="#111" stroke-width="1.4" stroke-linejoin="round"/></svg>
<div class="t" style="left:1426px;top:164px;font-size:12.5px;color:#4a4a4a;writing-mode:vertical-rl">Symbol</div>
<svg class="a" style="left:500px;top:145px;overflow:hidden" width="901" height="416" viewBox="500 145 901 416"><rect x="933.5" y="189.5" width="139" height="39" fill="#faf0d2" stroke="#a08a60" stroke-width="1"/><text x="989.5" y="213" text-anchor="middle" font-family="Liberation Sans" font-weight="bold" font-size="12" fill="#111">Tree</text><rect x="1048.5" y="201" width="19" height="15.5" rx="3" fill="#e89697" stroke="#8e6566" stroke-width="1.8"/><rect x="1200.5" y="169.5" width="98" height="78" fill="#faf0d2" stroke="#a08a60" stroke-width="1"/><path d="M1200.5 189.5 H1298.5" stroke="#a08a60" stroke-width="1"/><text x="1249.5" y="183" text-anchor="middle" font-family="Liberation Sans" font-weight="bold" font-size="12" fill="#111">Drone</text><line x1="1074" y1="209" x2="1198" y2="209" stroke="#000" stroke-width="2" stroke-dasharray="6 2 2 2"/><path d="M1192.5 203 L1199 209 L1192 215.5" fill="none" stroke="#000" stroke-width="2" stroke-dasharray="5 2"/><text x="1097" y="233" font-family="Liberation Sans" font-size="12" fill="#222">ThreatAnalysis</text><line x1="1003.5" y1="230" x2="1003.5" y2="268" stroke="#111" stroke-width="1" stroke-dasharray="3 1.8"/><path d="M998.5 262.4 L1003.5 268 L1008.5 262.4" fill="none" stroke="#111" stroke-width="1" stroke-dasharray="2.5 1"/><path d="M1003 284.5 C1016 291 1022.5 302 1022.5 321.5 Q1003 310 983.5 321.5 C983.5 302 990 291 1003 284.5Z" fill="#52e052" stroke="#000" stroke-width="2" stroke-linejoin="round"/><line x1="979" y1="310" x2="761" y2="375" stroke="#111" stroke-width="1" stroke-dasharray="3 1.8"/><path d="M764.9 368.6 L761 375 L767.8 378.2" fill="none" stroke="#111" stroke-width="1" stroke-dasharray="2.5 1"/><line x1="1028" y1="326" x2="1075" y2="370" stroke="#111" stroke-width="1" stroke-dasharray="3 1.8"/><path d="M1067.5 369.9 L1075 370 L1074.4 362.5" fill="none" stroke="#111" stroke-width="1" stroke-dasharray="2.5 1"/><line x1="1028" y1="310" x2="1246" y2="375.5" stroke="#111" stroke-width="1" stroke-dasharray="3 1.8"/><path d="M1239.2 378.7 L1246 375.5 L1242.1 369.1" fill="none" stroke="#111" stroke-width="1" stroke-dasharray="2.5 1"/><rect x="632.5" y="370.5" width="126" height="49" fill="#dcf8d0" stroke="#a08a60" stroke-width="1"/><text x="683.0" y="398.5" text-anchor="middle" font-family="Liberation Sans" font-weight="bold" font-size="12" fill="#111">Attack</text><rect x="733.5" y="386.5" width="20" height="16" rx="3" fill="#f8c898" stroke="#a08a70" stroke-width="1"/><rect x="629.0" y="367.0" width="7" height="7" fill="#000" stroke="#fff" stroke-width="1"/><rect x="629.0" y="391.0" width="7" height="7" fill="#000" stroke="#fff" stroke-width="1"/><rect x="629.0" y="416.0" width="7" height="7" fill="#000" stroke="#fff" stroke-width="1"/><rect x="692.0" y="367.0" width="7" height="7" fill="#000" stroke="#fff" stroke-width="1"/><rect x="692.0" y="416.0" width="7" height="7" fill="#000" stroke="#fff" stroke-width="1"/><rect x="755.0" y="367.0" width="7" height="7" fill="#000" stroke="#fff" stroke-width="1"/><rect x="755.0" y="391.0" width="7" height="7" fill="#000" stroke="#fff" stroke-width="1"/><rect x="755.0" y="416.0" width="7" height="7" fill="#000" stroke="#fff" stroke-width="1"/><rect x="1039.5" y="370.5" width="126" height="49" fill="#faf0d2" stroke="#a08a60" stroke-width="1"/><text x="1090.0" y="398.5" text-anchor="middle" font-family="Liberation Sans" font-weight="bold" font-size="12" fill="#111">Attack1</text><rect x="1140.5" y="386.5" width="20" height="16" rx="3" fill="#f8c898" stroke="#a08a70" stroke-width="1"/><rect x="1246.5" y="370.5" width="126" height="49" fill="#faf0d2" stroke="#a08a60" stroke-width="1"/><text x="1297.0" y="398.5" text-anchor="middle" font-family="Liberation Sans" font-weight="bold" font-size="12" fill="#111">Attack2</text><rect x="1347.5" y="386.5" width="20" height="16" rx="3" fill="#f8c898" stroke="#a08a70" stroke-width="1"/><line x1="760" y1="395.5" x2="839" y2="395.5" stroke="#777" stroke-width="1"/><path d="M839.5 365.5 H947 L958.5 377.5 V424.5 H839.5Z" fill="#fffcd2" stroke="#000" stroke-width="1.6"/><path d="M947 365.5 V377.5 H958.5" fill="none" stroke="#000" stroke-width="1.4"/><path d="M840 384.5 H958" stroke="#777" stroke-width="1"/><text x="853" y="379" font-family="Liberation Sans" font-size="12.2" fill="#111">CounterMeasure</text><text x="844" y="400" font-family="Liberation Sans" font-size="12.2" fill="#111">Counter-Measure</text><line x1="695.5" y1="421" x2="695.5" y2="448.5" stroke="#111" stroke-width="1" stroke-dasharray="3 1.8"/><path d="M690.5 442.9 L695.5 448.5 L700.5 442.9" fill="none" stroke="#111" stroke-width="1" stroke-dasharray="2.5 1"/><path d="M677.5 503.5 V484 A18.5 19 0 0 1 714.5 484 V503.5Z" fill="#18e0d2" stroke="#222" stroke-width="1.5"/><line x1="671" y1="502" x2="632.5" y2="530" stroke="#111" stroke-width="1" stroke-dasharray="3 1.8"/><path d="M634.1 522.7 L632.5 530 L640.0 530.8" fill="none" stroke="#111" stroke-width="1" stroke-dasharray="2.5 1"/><line x1="721" y1="501" x2="763.5" y2="530" stroke="#111" stroke-width="1" stroke-dasharray="3 1.8"/><path d="M756.1 531.0 L763.5 530 L761.7 522.7" fill="none" stroke="#111" stroke-width="1" stroke-dasharray="2.5 1"/><rect x="533.5" y="530.5" width="126" height="49" fill="#faf0d2" stroke="#a08a60" stroke-width="1"/><text x="584.0" y="558.5" text-anchor="middle" font-family="Liberation Sans" font-weight="bold" font-size="12" fill="#111">Attack2</text><rect x="634.5" y="546.5" width="20" height="16" rx="3" fill="#f8c898" stroke="#a08a70" stroke-width="1"/><rect x="740.5" y="530.5" width="126" height="49" fill="#dcf8d0" stroke="#a08a60" stroke-width="1"/><text x="791.0" y="558.5" text-anchor="middle" font-family="Liberation Sans" font-weight="bold" font-size="12" fill="#111">Attack1</text><rect x="841.5" y="546.5" width="20" height="16" rx="3" fill="#f8c898" stroke="#a08a70" stroke-width="1"/><line x1="867" y1="555.5" x2="947" y2="555.5" stroke="#777" stroke-width="1"/><path d="M947.5 525.5 H1055 L1066.5 537.5 V584.5 H947.5Z" fill="#fffcd2" stroke="#000" stroke-width="1.6"/><path d="M1055 525.5 V537.5 H1066.5" fill="none" stroke="#000" stroke-width="1.4"/><path d="M948 544.5 H1066" stroke="#777" stroke-width="1"/><text x="961" y="539" font-family="Liberation Sans" font-size="12.2" fill="#111">CounterMeasure</text><text x="952" y="560" font-family="Liberation Sans" font-size="12.2" fill="#111">Counter-Measure</text></svg>
<div class="a" style="left:364px;top:569px;width:1076px;height:1px;background:#bcbcb8;"></div>
<div class="a" style="left:364px;top:570px;width:1px;height:320px;background:#aaaaa7;"></div>
<div class="a" style="left:365px;top:597px;width:530px;height:1px;background:#bcbcb8;"></div>
<div class="a" style="left:1024px;top:597px;width:416px;height:1px;background:#bcbcb8;"></div>
<svg class="a" style="left:370px;top:572.5px;" width="22" height="22" viewBox="0 0 22 22"><rect x="2" y="3" width="14" height="18" rx="1" fill="#e8eef6" stroke="#e87830" stroke-width="1.6"/><rect x="5" y="1" width="8" height="4" rx="1" fill="#3a4a6a"/><path d="M5 8 H13 M5 11 H13 M5 14 H11 M5 17 H10" stroke="#4a5a7a" stroke-width="1"/><circle cx="16" cy="16.5" r="5.2" fill="#2aa07a"/><path d="M13.5 16.5 L15.5 18.5 L18.8 14.8" stroke="#fff" stroke-width="1.5" fill="none"/></svg>
<div class="t" style="left:396px;top:577.15px;font-size:14px;color:#3e4244;font-weight:normal;">Audit</div>
<div class="a" style="left:433px;top:571px;width:1px;height:26px;background:#bcbcb8;"></div>
<svg class="a" style="left:438px;top:572.5px;" width="22" height="22" viewBox="0 0 22 22"><rect x="6" y="1" width="10" height="6" fill="#fce6a0" stroke="#c8901c" stroke-width="1.2"/><rect x="4.5" y="0" width="13" height="8" fill="none" stroke="#8ab8f0" stroke-width="1"/><path d="M11 7 V11 M4 11 H18 M4 11 V14 M18 11 V14" stroke="#c8901c" stroke-width="1.3" fill="none"/><rect x="0.75" y="14" width="7.5" height="6" fill="#fce6a0" stroke="#c8901c" stroke-width="1.3"/><rect x="14" y="14" width="7.5" height="6" fill="#fce6a0" stroke="#c8901c" stroke-width="1.3"/></svg>
<div class="t" style="left:464px;top:577.15px;font-size:14px;color:#3e4244;font-weight:normal;">Outline</div>
<div class="a" style="left:516px;top:571px;width:1px;height:26px;background:#bcbcb8;"></div>
<svg class="a" style="left:521px;top:572.5px;" width="22" height="22" viewBox="0 0 22 22"><path d="M9 14 L14 9" stroke="#3a5478" stroke-width="2.5"/><path d="M7.5 10 L4.5 13 Q2 16 4.5 18.5 Q7 21 10 18 L13 15" fill="none" stroke="#3a5478" stroke-width="2.6" stroke-linecap="round"/><path d="M9.5 8 L12.5 5 Q15 2.5 17.5 5 Q20 7.5 17 10.5 L14.5 13" fill="none" stroke="#3a5478" stroke-width="2.6" stroke-linecap="round"/></svg>
<div class="t" style="left:547px;top:577.15px;font-size:14px;color:#3e4244;font-weight:normal;">Links Editor</div>
<div class="a" style="left:625px;top:571px;width:1px;height:26px;background:#bcbcb8;"></div>
<svg class="a" style="left:630px;top:572.5px;" width="22" height="22" viewBox="0 0 22 22"><rect x="0.75" y="0.75" width="20.5" height="20.5" fill="#dce8f4" stroke="#2a3a6a" stroke-width="1.5"/><rect x="3.5" y="3.5" width="6" height="8" fill="#fce8a0" stroke="#556" stroke-width="0.9"/><circle cx="15" cy="15" r="3.2" fill="#fce8a0" stroke="#556" stroke-width="0.9"/><path d="M6.5 11.5 V15 H11.8" stroke="#556" stroke-width="0.8" fill="none"/><circle cx="15" cy="5" r="0.8" fill="#a8c"/><circle cx="18" cy="8" r="0.8" fill="#a8c"/></svg>
<div class="t" style="left:656px;top:577.15px;font-size:14px;color:#3e4244;font-weight:normal;">Diagrams</div>
<div class="a" style="left:720px;top:571px;width:1px;height:26px;background:#bcbcb8;"></div>
<svg class="a" style="left:725px;top:571.5px;" width="22" height="24" viewBox="0 0 22 24"><path d="M5 2 Q5 0.75 6.5 0.75 H19 Q21 0.75 21 2.5 Q21 4 19 4 H18 V19" fill="#fff" stroke="#5aa0e0" stroke-width="1.2"/><path d="M5 2 V19 H2 Q0.75 19 0.75 21 Q0.75 23 3 23 H15 Q17.5 23 17.5 20 V19" fill="#fff" stroke="#5aa0e0" stroke-width="1.2"/><path d="M10 5 L10.5 7 M9.5 9 L10.5 11" stroke="#2a8a2a" stroke-width="1"/><path d="M8 12 L11 16 L13.5 12Z" fill="#6ac030"/></svg>
<div class="t" style="left:751px;top:577.15px;font-size:14px;color:#3e4244;font-weight:normal;">Script</div>
<div class="a" style="left:793px;top:571px;width:1px;height:26px;background:#bcbcb8;"></div>
<svg class="a" style="left:798px;top:571.5px;" width="24" height="24" viewBox="0 0 24 24"><rect x="0.75" y="0.75" width="22" height="22" fill="#fff" stroke="#3a4a6a" stroke-width="1.5"/><rect x="0.75" y="0.75" width="22" height="4" fill="#3a4a6a"/><path d="M5 5 V22 M0.75 9 H22 M0.75 13 H22 M0.75 17 H22" stroke="#889" stroke-width="0.8"/><path d="M9 11 L15 9 L22 11 V20 L15 23 L9 20Z" fill="#f89a20"/><path d="M15 13 L22 11 V20 L15 23Z" fill="#4a2a7a"/><path d="M9 11 L15 9 L22 11 L15 13Z" fill="#7a1a3a"/></svg>
<div class="t" style="left:824px;top:577.15px;font-size:14px;color:#3e4244;font-weight:normal;">Properties</div>
<div class="a" style="left:895px;top:571px;width:1px;height:26px;background:#bcbcb8;"></div>
<svg class="a" style="left:900px;top:572.5px;" width="22" height="22" viewBox="0 0 22 22"><rect x="7" y="0.75" width="7" height="6" fill="#ee1111" stroke="#222" stroke-width="1.2"/><path d="M10.5 7 L4.5 13 M10.5 7 L16.5 13" stroke="#222" stroke-width="1.1"/><rect x="0.75" y="13" width="7" height="6" fill="#11e8f0" stroke="#222" stroke-width="1.2"/><rect x="13.5" y="13" width="7" height="6" fill="#11dd22" stroke="#222" stroke-width="1.2"/></svg>
<div class="t" style="left:926px;top:577.15px;font-size:14px;color:#1f2324;font-weight:normal;">Attack Tree</div>
<div class="a" style="left:1024px;top:571px;width:1px;height:26px;background:#bcbcb8;"></div>
<svg class="a" style="left:1006px;top:579px;" width="11" height="10" viewBox="0 0 11 10"><path d="M0.8 0.8 H3.3 L5 2.6 L6.7 0.8 H9.2 V3.3 L7.4 5 L9.2 6.7 V9.2 H6.7 L5 7.4 L3.3 9.2 H0.8 V6.7 L2.6 5 L0.8 3.3Z" fill="#fff" stroke="#111" stroke-width="1.4" stroke-linejoin="round"/></svg>
<div class="a" style="left:896px;top:570px;width:128px;height:28px;background:#e8e8e7;border-radius:4px 4px 0 0"></div>
<svg class="a" style="left:900px;top:572.5px;" width="22" height="22" viewBox="0 0 22 22"><rect x="7" y="0.75" width="7" height="6" fill="#ee1111" stroke="#222" stroke-width="1.2"/><path d="M10.5 7 L4.5 13 M10.5 7 L16.5 13" stroke="#222" stroke-width="1.1"/><rect x="0.75" y="13" width="7" height="6" fill="#11e8f0" stroke="#222" stroke-width="1.2"/><rect x="13.5" y="13" width="7" height="6" fill="#11dd22" stroke="#222" stroke-width="1.2"/></svg>
<div class="t" style="left:926px;top:577.15px;font-size:14px;color:#1e2426;font-weight:normal;">Attack Tree</div>
<svg class="a" style="left:1006px;top:579px;" width="11" height="10" viewBox="0 0 11 10"><path d="M0.8 0.8 H3.3 L5 2.6 L6.7 0.8 H9.2 V3.3 L7.4 5 L9.2 6.7 V9.2 H6.7 L5 7.4 L3.3 9.2 H0.8 V6.7 L2.6 5 L0.8 3.3Z" fill="#fff" stroke="#111" stroke-width="1.4" stroke-linejoin="round"/></svg>
<svg class="a" style="left:1398px;top:577px;" width="11" height="5" viewBox="0 0 11 5"><rect x="0.65" y="0.65" width="9" height="3" fill="#fff" stroke="#111" stroke-width="1.3"/></svg>
<svg class="a" style="left:1422px;top:577px;" width="11" height="11" viewBox="0 0 11 11"><rect x="0.65" y="0.65" width="9" height="9" fill="#fff" stroke="#111" stroke-width="1.3"/><path d="M0.65 2.6 H9.65" stroke="#111" stroke-width="1.1"/></svg>
<div class="a" style="left:365px;top:598px;width:1075px;height:292px;background:#e8e8e7;"></div>
<div class="a" style="left:365px;top:598px;width:2px;height:292px;background:#fff;"></div>
<svg class="a" style="left:1383px;top:608px;" width="18" height="19" viewBox="0 0 18 19"><path d="M4 1 Q2 1 2 3 V7.5 Q2 9 0.5 9 Q2 9 2 10.5 V15.5 Q2 17.5 4 17.5" fill="none" stroke="#333" stroke-width="1.4"/><path d="M13 1 Q15 1 15 3 V7.5 Q15 9 16.5 9 Q15 9 15 10.5 V15.5 Q15 17.5 13 17.5" fill="none" stroke="#333" stroke-width="1.4"/><path d="M6 6.5 H11 M8.5 6.5 V13" stroke="#555" stroke-width="1.3"/><path d="M13 3 L15.5 0.5 L18 3 L15.5 5.5Z" fill="#22cc44" stroke="#2244cc" stroke-width="0.9"/></svg>
<svg class="a" style="left:1415px;top:608px;" width="18" height="19" viewBox="0 0 18 19"><path d="M4 1 Q2 1 2 3 V7.5 Q2 9 0.5 9 Q2 9 2 10.5 V15.5 Q2 17.5 4 17.5" fill="none" stroke="#333" stroke-width="1.4"/><path d="M13 1 Q15 1 15 3 V7.5 Q15 9 16.5 9 Q15 9 15 10.5 V15.5 Q15 17.5 13 17.5" fill="none" stroke="#333" stroke-width="1.4"/><path d="M6 6.5 H11 M8.5 6.5 V13" stroke="#555" stroke-width="1.3"/><rect x="12" y="0" width="6" height="2.2" fill="#e01010"/></svg>
<div class="a" style="left:367px;top:632px;width:1072px;height:1px;background:#bcbcb8;"></div>
<div class="a" style="left:367px;top:632px;width:1px;height:258px;background:#c4c4c0;"></div>
<div class="a" style="left:1438px;top:633px;width:1px;height:257px;background:#c8c8c5;"></div>
<div class="a" style="left:368px;top:633px;width:1070px;height:257px;background:#fff;"></div>
<div class="a" style="left:368px;top:655px;width:1070px;height:1px;background:#e6e6e6;"></div>
<div class="a" style="left:567px;top:633px;width:1px;height:22px;background:#e6e6e6;"></div>
<div class="t" style="left:375px;top:636.73px;font-size:14.5px;color:#a4a6a7;font-weight:normal;-webkit-text-stroke:0.4px #a4a6a7;">Property</div>
<div class="t" style="left:575.5px;top:636.73px;font-size:14.5px;color:#a4a6a7;font-weight:normal;-webkit-text-stroke:0.4px #a4a6a7;">Value</div>
<div class="a" style="left:368px;top:656px;width:1070px;height:26px;background:#f4f4f8;"></div>
<div class="t" style="left:414px;top:662.15px;font-size:14px;color:#1f2324;font-weight:normal;">Name</div>
<div class="t" style="left:597px;top:662.15px;font-size:14px;color:#1f2324;font-weight:normal;">Attack</div>
<div class="t" style="left:414px;top:688.15px;font-size:14px;color:#1f2324;font-weight:normal;">Severity</div>
<div class="t" style="left:597px;top:688.15px;font-size:14px;color:#1f2324;font-weight:normal;">MEDIUM</div>
<div class="a" style="left:368px;top:708px;width:1070px;height:26px;background:#f4f4f8;"></div>
<div class="t" style="left:414px;top:714.15px;font-size:14px;color:#1f2324;font-weight:normal;">Probability</div>
<div class="t" style="left:597px;top:714.15px;font-size:14px;color:#1f2324;font-weight:normal;">MEDIUM</div>
<div class="t" style="left:414px;top:740.15px;font-size:14px;color:#1f2324;font-weight:normal;">Risk level</div>
<div class="t" style="left:597px;top:740.15px;font-size:14px;color:#1f2324;font-weight:normal;">HIGH</div>
<div class="a" style="left:368px;top:760px;width:1070px;height:26px;background:#f4f4f8;"></div>
<div class="t" style="left:414px;top:766.15px;font-size:14px;color:#1f2324;font-weight:normal;">Security related</div>
<div class="a" style="left:571px;top:763px;width:20px;height:20px;background:#fff;border:1.5px solid #2e3e50;border-radius:1.5px;box-sizing:border-box"></div>
<div class="t" style="left:414px;top:792.15px;font-size:14px;color:#1f2324;font-weight:normal;">Safety related</div>
<svg class="a" style="left:571px;top:789px;" width="20" height="20" viewBox="0 0 20 20"><rect x="0" y="0" width="20" height="20" rx="1.5" fill="#34495e"/><path d="M4 10.5 L8 14.5 L16 5.5" stroke="#fff" stroke-width="2" fill="none"/></svg>
<div class="a" style="left:368px;top:812px;width:1070px;height:26px;background:#f4f4f8;"></div>
<div class="t" style="left:414px;top:818.15px;font-size:14px;color:#1f2324;font-weight:normal;">Out of scope</div>
<div class="a" style="left:571px;top:815px;width:20px;height:20px;background:#fff;border:1.5px solid #2e3e50;border-radius:1.5px;box-sizing:border-box"></div>
<div class="t" style="left:414px;top:844.15px;font-size:14px;color:#1f2324;font-weight:normal;">Programming Language</div>
<div class="t" style="left:597px;top:844.15px;font-size:14px;color:#1f2324;font-weight:normal;">Python</div>
<div class="a" style="left:368px;top:864px;width:1070px;height:26px;background:#f4f4f8;"></div>
<div class="t" style="left:414px;top:870.15px;font-size:14px;color:#1f2324;font-weight:normal;">Counter-Measure</div>
<div class="t" style="left:597px;top:870.15px;font-size:14px;color:#1f2324;font-weight:normal;">Counter-Measure</div>
<div class="a" style="left:567px;top:656px;width:0;height:234px;border-left:1px dotted #333"></div>
</body></html>
